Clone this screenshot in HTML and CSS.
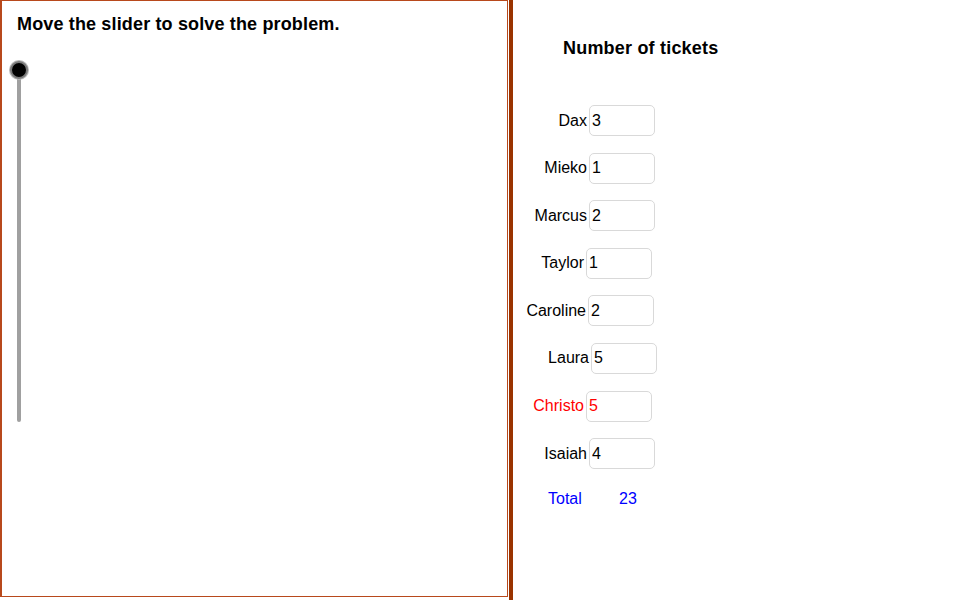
FILE: index.html
```html
<!DOCTYPE html>
<html>
<head>
<meta charset="utf-8">
<link rel="stylesheet" href="styles.css">
</head>
<body>
<div class="app">
  <section class="left">
    <h1 class="title">Move the slider to solve the problem.</h1>
    <div class="slider">
      <div class="track"></div>
      <div class="knob"></div>
    </div>
  </section>
  <div class="divider"></div>
  <section class="right">
    <h2 class="heading">Number of tickets</h2>
    <div class="rows">
      <div class="row"><span class="lbl">Dax</span><input class="box" type="text" value="3"></div>
      <div class="row"><span class="lbl">Mieko</span><input class="box" type="text" value="1"></div>
      <div class="row"><span class="lbl">Marcus</span><input class="box" type="text" value="2"></div>
      <div class="row shift-l3"><span class="lbl">Taylor</span><input class="box" type="text" value="1"></div>
      <div class="row shift-l1"><span class="lbl">Caroline</span><input class="box" type="text" value="2"></div>
      <div class="row shift-r2"><span class="lbl">Laura</span><input class="box" type="text" value="5"></div>
      <div class="row shift-l3 red"><span class="lbl">Christo</span><input class="box" type="text" value="5"></div>
      <div class="row"><span class="lbl">Isaiah</span><input class="box" type="text" value="4"></div>
    </div>
    <div class="total"><span class="total-lbl">Total</span><span class="total-val">23</span></div>
  </section>
</div>
</body>
</html>
```
FILE: styles.css
```css
html, body {
  margin: 0;
  padding: 0;
  background: #ffffff;
}
body {
  font-family: "Liberation Sans", Arial, sans-serif;
  color: #000;
}
.app {
  display: flex;
  width: 970px;
  height: 600px;
}
.left {
  box-sizing: border-box;
  width: 508px;
  height: 597px;
  border: 1px solid #b8491c;
  border-left-width: 2px;
  display: flex;
  flex-direction: column;
}
.title {
  margin: 12px 0 0 15px;
  font-family: "Liberation Sans", Arial, sans-serif;
  font-weight: bold;
  font-size: 18px;
  line-height: 22px;
  letter-spacing: 0.15px;
}
.slider {
  position: relative;
  margin: 26px 0 0 6px;
  width: 24px;
  height: 364px;
}
.track {
  position: absolute;
  left: 9px;
  top: 8px;
  width: 4px;
  height: 353px;
  background: #a0a0a0;
  border-radius: 2px;
}
.knob {
  position: absolute;
  left: 2px;
  top: 0;
  width: 14px;
  height: 14px;
  border-radius: 50%;
  background: #000;
  border: 2px solid #7a7a7a;
  box-shadow: 0 0 0 1px #b8b8b8;
}
.divider {
  width: 4px;
  height: 600px;
  margin-left: 1px;
  background: #993300;
}
.right {
  flex: 1;
  display: flex;
  flex-direction: column;
}
.heading {
  margin: 37px 0 0 50px;
  font-family: "Liberation Sans", Arial, sans-serif;
  font-weight: bold;
  font-size: 18px;
  line-height: 22px;
  letter-spacing: 0.2px;
}
.rows {
  margin-top: 46px;
  display: flex;
  flex-direction: column;
  gap: 16.6px;
}
.row {
  display: flex;
  align-items: center;
  height: 31px;
  font-size: 16px;
}
.lbl {
  width: 74px;
  text-align: right;
  padding-right: 2px;
  white-space: nowrap;
}
.box {
  box-sizing: border-box;
  width: 66px;
  height: 31px;
  border: 1px solid #d9d9d9;
  border-radius: 5px;
  padding: 0 2px;
  font-family: "Liberation Sans", Arial, sans-serif;
  font-size: 16px;
  color: #000;
  background: #fff;
  outline: none;
}
.shift-l3 { margin-left: -3px; }
.shift-l1 { margin-left: -1px; }
.shift-r2 { margin-left: 2px; }
.red .lbl, .red .box { color: #ff0000; }
.total {
  margin-top: 21px;
  margin-left: 35px;
  display: flex;
  font-size: 16px;
  line-height: 18px;
  color: #0000ff;
}
.total-lbl { width: 71px; }
```
